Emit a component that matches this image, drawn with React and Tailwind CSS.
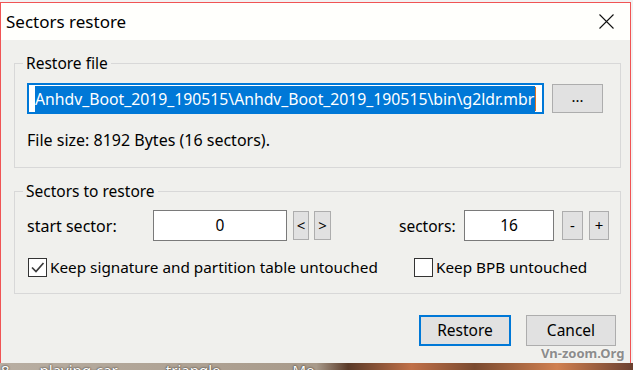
import React from "react";

const font = "font-['Segoe_UI','Noto_Sans',sans-serif]";

const SmallButton = ({ children, className = "" }) => (
  <button
    className={`h-[29px] flex items-center justify-center bg-[#e1e1e1] border border-[#adadad] text-[15px] leading-none text-black ${className}`}
  >
    {children}
  </button>
);

const Checkbox = ({ checked, label }) => (
  <label className="flex items-center gap-[3px]">
    <span className="w-[19px] h-[19px] border border-[#333333] bg-white flex items-center justify-center">
      {checked && (
        <svg width="15" height="15" viewBox="0 0 15 15">
          <path d="M2 7.5 L6 11.5 L13.5 3" fill="none" stroke="#3a3a3a" strokeWidth="1.7" />
        </svg>
      )}
    </span>
    <span className="text-[15.3px] leading-[20px] text-black">{label}</span>
  </label>
);

// group box: fieldset with the title sitting on the top border
const GroupBox = ({ title, className = "", children }) => (
  <fieldset className={`border border-[#d8d8d8] ${className}`}>
    <legend className="ml-[-4px] px-[3px] text-[15.5px] leading-[20px] text-black">{title}</legend>
    {children}
  </fieldset>
);

const App = () => {
  return (
    <div className={`relative w-[633px] h-[370px] overflow-hidden bg-[#f2f2f2] ${font}`}>
      <div className="pt-[2px]">
        <div className="w-[631px] h-[361px] border border-b-0 border-[#f05454] flex flex-col">
          {/* Title bar */}
          <div className="h-[37px] bg-[#fffffc] flex items-center justify-between pl-[5px] pr-[16px]">
            <span className="text-[17px] leading-none text-black">Sectors restore</span>
            <svg width="15" height="15" viewBox="0 0 15 15">
              <path d="M0.5 0.5 L14.5 14.5 M14.5 0.5 L0.5 14.5" stroke="#111" strokeWidth="1.1" />
            </svg>
          </div>

          {/* Body */}
          <div className="flex-1 bg-[#f0f0ed] pl-[13px] pr-[5px] pt-[13px]">
            <GroupBox title="Restore file" className="w-[607px] h-[115px] pl-[12px] pt-[10px]">
              <div className="flex items-center gap-[8px]">
                <div className="w-[517px] h-[31px] border-2 border-[#0078d7] bg-white flex items-center pl-[6px]">
                  <span className="bg-[#0078d7] text-white text-[15.75px] leading-[26px] pr-[1px] whitespace-nowrap">
                    Anhdv_Boot_2019_190515\Anhdv_Boot_2019_190515\bin\g2ldr.mbr
                  </span>
                  <span className="w-[1px] h-[24px] bg-[#e07020]" />
                </div>
                <button className="w-[51px] h-[29px] bg-[#e1e1e1] border border-[#adadad] text-[15px] leading-none text-black pb-[4px]">
                  ...
                </button>
              </div>
              <div className="mt-[16px] text-[16px] leading-[20px] text-black">
                File size: 8192 Bytes (16 sectors).
              </div>
            </GroupBox>

            <GroupBox title="Sectors to restore" className="mt-[13px] w-[607px] h-[113px] pl-[12px] pt-[9px]">
              <div className="flex items-center h-[31px]">
                <span className="w-[126px] text-[16px] leading-[20px] text-black">start sector:</span>
                <div className="w-[134px] h-[31px] border border-[#7a7a7a] bg-white flex items-center justify-center text-[15.5px] text-black">
                  0
                </div>
                <SmallButton className="ml-[6px] w-[16px]">&lt;</SmallButton>
                <SmallButton className="ml-[5px] w-[17px]">&gt;</SmallButton>
                <span className="ml-[68px] w-[65px] text-[15.5px] leading-[20px] text-black">sectors:</span>
                <div className="w-[90px] h-[31px] border border-[#7a7a7a] bg-white flex items-center justify-center text-[15.5px] text-black">
                  16
                </div>
                <SmallButton className="ml-[8px] w-[21px]">-</SmallButton>
                <SmallButton className="ml-[6px] w-[20px]">+</SmallButton>
              </div>
              <div className="mt-[16px] flex items-center">
                <div className="w-[387px] pl-[1px]">
                  <Checkbox checked label="Keep signature and partition table untouched" />
                </div>
                <Checkbox label="Keep BPB untouched" />
              </div>
            </GroupBox>

            <div className="mt-[21px] flex justify-end gap-[15px] pr-[9px]">
              <button className="w-[92px] h-[31px] bg-[#e1e1e1] border-2 border-[#0078d7] text-[15.5px] text-black">
                Restore
              </button>
              <button className="w-[90px] h-[31px] bg-[#e1e1e1] border border-[#adadad] text-[15.5px] text-black">
                Cancel
              </button>
            </div>
          </div>
        </div>

        {/* Desktop behind the window */}
        <div className="h-[7px] overflow-hidden flex bg-[linear-gradient(90deg,#b8aea2_0%,#a89a8a_50%,#5a3a28_55%,#c07048_65%,#7a4a30_75%,#d08050_88%,#6a4030_100%)]">
          <div className="flex pl-[1px] text-[15px] leading-[14px] text-white [text-shadow:0_0_2px_#000]">
            <span>8</span>
            <span className="ml-[30px]">playing-car</span>
            <span className="ml-[48px]">triangle</span>
            <span className="ml-[72px]">Me</span>
          </div>
        </div>
      </div>

      <span className="absolute left-[541px] top-[346px] text-[13px] leading-[14px] font-bold text-[#8c8c8c] [text-shadow:0_0_2px_#fff]">
        Vn-zoom.Org
      </span>
    </div>
  );
};

export default App;
